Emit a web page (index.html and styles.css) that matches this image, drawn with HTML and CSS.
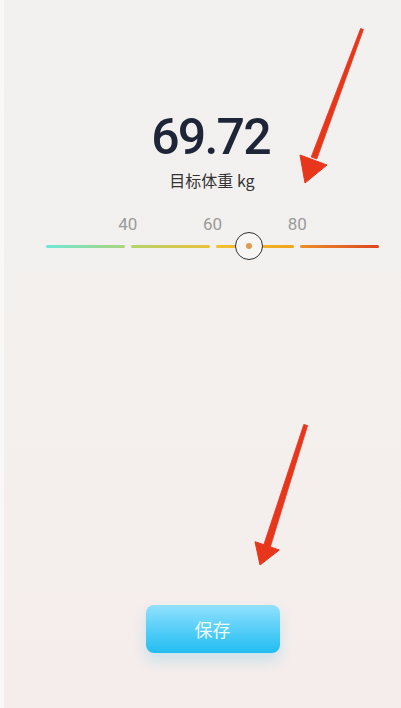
FILE: index.html
```html
<!DOCTYPE html>
<html lang="zh">
<head>
<meta charset="utf-8">
<title>目标体重</title>
<link rel="stylesheet" href="styles.css">
</head>
<body>
<div class="page">
  <div class="value">69.72</div>
  <div class="caption">目标体重 kg</div>
  <div class="scale">
    <div class="ticks">
      <span class="tick t1">40</span>
      <span class="tick t2">60</span>
      <span class="tick t3">80</span>
    </div>
    <div class="track">
      <span class="seg s1"></span>
      <span class="gap"></span>
      <span class="seg s2"></span>
      <span class="gap"></span>
      <span class="seg s3"></span>
      <span class="gap"></span>
      <span class="seg s4"></span>
      <span class="thumb" style="left: 60.96%"><span class="dot"></span></span>
    </div>
  </div>
  <button class="save" type="button">保存</button>
  <svg class="arrows" width="401" height="708" viewBox="0 0 401 708" aria-hidden="true">
    <polygon points="360.6,28.5 363.4,29.5 316.8,159 311.2,157" fill="#e8361c" stroke="#e8361c" stroke-width="0.8" stroke-linejoin="round"/>
    <polygon points="300,155 327,165 305,183" fill="#e8361c" stroke="#e8361c" stroke-width="1" stroke-linejoin="round"/>
    <polygon points="303.8,424.4 307.6,425.6 270.3,547 263.7,545" fill="#e8361c" stroke="#e8361c" stroke-width="0.8" stroke-linejoin="round"/>
    <polygon points="255,541.7 279.3,550 260,565" fill="#e8361c" stroke="#e8361c" stroke-width="1" stroke-linejoin="round"/>
  </svg>
</div>
</body>
</html>
```
FILE: styles.css
```css
html, body {
  margin: 0;
  padding: 0;
}
body {
  width: 401px;
  height: 708px;
  overflow: hidden;
  font-family: Roboto, "Noto Sans CJK SC", sans-serif;
}
.page {
  position: relative;
  box-sizing: border-box;
  width: 401px;
  height: 708px;
  padding-top: 111px;
  border-left: 4px solid #f9f8f7;
  background: linear-gradient(180deg, #f2f1ef 0%, #f3f0ee 50%, #f5edeb 100%);
  display: flex;
  flex-direction: column;
  align-items: center;
}
.value {
  font-family: Roboto, sans-serif;
  font-size: 50px;
  line-height: 52px;
  height: 52px;
  font-weight: 500;
  color: #1f2539;
  letter-spacing: -1.8px;
  margin-left: 16px;
}
.caption {
  margin-top: 7px;
  font-family: "Noto Sans CJK SC", Roboto, sans-serif;
  font-size: 16px;
  line-height: 20px;
  color: #333333;
  margin-left: 19px;
}
.scale {
  margin-top: 24px;
  width: 333px;
  align-self: flex-start;
  margin-left: 42px;
}
.ticks,
.track {
  display: grid;
  grid-template-columns: 1fr 6px 1fr 6px 1fr 6px 1fr;
}
.ticks {
  height: 20px;
}
.tick {
  width: 0;
  display: flex;
  justify-content: center;
  font-size: 17px;
  line-height: 20px;
  color: #9a9a9a;
  white-space: nowrap;
}
.t1 { grid-column: 2; margin-left: 3px; }
.t2 { grid-column: 4; margin-left: 3px; }
.t3 { grid-column: 6; margin-left: 3px; }
.track {
  position: relative;
  height: 24px;
  align-items: center;
}
.seg {
  height: 3px;
  border-radius: 2px;
}
.s1 { background: linear-gradient(90deg, #6ee8d6, #a9d47a); }
.s2 { background: linear-gradient(90deg, #b4d46b, #e9c23a); }
.s3 { background: linear-gradient(90deg, #efc232, #f0a31f); }
.s4 { background: linear-gradient(90deg, #ee8e2a, #dc461e); }
.thumb {
  position: absolute;
  top: 50%;
  width: 26px;
  height: 26px;
  transform: translate(-50%, -50%);
  border: 1.5px solid #2e2f33;
  border-radius: 50%;
  background: #f7f6f4;
  display: flex;
  align-items: center;
  justify-content: center;
}
.dot {
  width: 6px;
  height: 6px;
  border-radius: 50%;
  background: #e39a52;
}
.save {
  margin-top: 347px;
  margin-left: 20px;
  width: 134px;
  height: 48px;
  border: none;
  border-radius: 8px;
  background: linear-gradient(180deg, #91e1fd 0%, #4ccbf7 60%, #23bdf2 100%);
  box-shadow: 0 8px 14px rgba(60, 180, 235, 0.22);
  color: #eefaff;
  font-family: "Noto Sans CJK SC", sans-serif;
  font-size: 18px;
  line-height: 48px;
  padding: 0;
}
.arrows {
  position: absolute;
  left: -4px;
  top: 0;
}
```
